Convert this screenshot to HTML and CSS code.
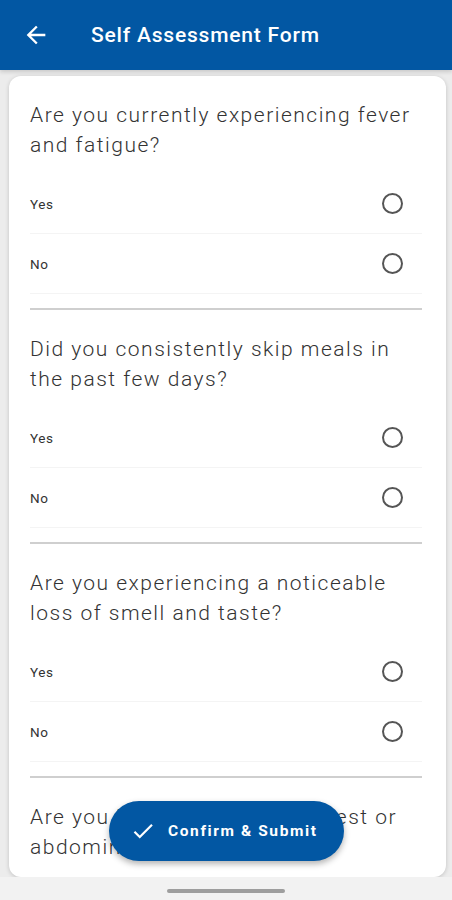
FILE: index.html
```html
<!doctype html>
<html lang="en">
  <head>
    <meta charset="UTF-8" />
    <meta name="viewport" content="width=device-width, initial-scale=1.0" />
    <title>Self Assessment Form</title>
    <link rel="stylesheet" href="styles.css">
  </head>
  <body>
    <div class="app">
      <header class="app-bar">
        <svg class="back" width="24" height="24" viewBox="0 0 24 24">
          <path d="M20 11H7.83l5.59-5.59L12 4l-8 8 8 8 1.41-1.41L7.83 13H20v-2z" fill="#fff" />
        </svg>
        <h1>Self Assessment Form</h1>
      </header>

      <main class="content">
        <div class="card">
          <div class="question">
            <p class="q-text">Are you currently experiencing fever and fatigue?</p>
            <div class="option"><span>Yes</span><i class="radio"></i></div>
            <div class="option"><span>No</span><i class="radio"></i></div>
          </div>
          <div class="question">
            <p class="q-text">Did you consistently skip meals in the past few days?</p>
            <div class="option"><span>Yes</span><i class="radio"></i></div>
            <div class="option"><span>No</span><i class="radio"></i></div>
          </div>
          <div class="question">
            <p class="q-text">Are you experiencing a noticeable loss of smell and taste?</p>
            <div class="option"><span>Yes</span><i class="radio"></i></div>
            <div class="option"><span>No</span><i class="radio"></i></div>
          </div>
          <div class="question">
            <p class="q-text">Are you having pain in the chest or abdominal area?</p>
          </div>
        </div>
      </main>

      <div class="nav-bar"><span class="handle"></span></div>

      <button type="button" class="fab">
        <svg width="26" height="26" viewBox="0 0 24 24">
          <path d="M9 16.17 4.83 12l-1.42 1.41L9 19 21 7l-1.41-1.41z" fill="#fff" />
        </svg>
        Confirm &amp; Submit
      </button>
    </div>
  </body>
</html>
```

FILE: styles.css
```css
body {
  margin: 0;
  font-family: Roboto, "Noto Sans", sans-serif;
  background: #f2f2f2;
}
.app {
  width: 452px;
  height: 900px;
  display: flex;
  flex-direction: column;
  overflow: hidden;
}
.app-bar {
  height: 70px;
  flex-shrink: 0;
  background: #0257a3;
  display: flex;
  align-items: center;
  padding: 0 0 0 22px;
  box-shadow: 0 2px 4px rgba(0, 0, 0, 0.15);
  position: relative;
  z-index: 1;
}
.back {
  width: 28px;
  height: 28px;
}
.app-bar h1 {
  margin: 0 0 0 41px;
  color: #fff;
  font-size: 21px;
  font-weight: 500;
  letter-spacing: 0.8px;
}
.content {
  flex: 1;
  min-height: 0;
  background: #ececec;
  padding: 6px 6px 0 9px;
  display: flex;
}
.card {
  flex: 1;
  background: #fff;
  border-radius: 12px;
  box-shadow: 0 1px 4px rgba(0, 0, 0, 0.18);
  padding: 24px 24px 0 21px;
  overflow: hidden;
}
.question {
  border-bottom: 2px solid #cfcfcf;
  padding-bottom: 14px;
  margin-bottom: 24px;
}
.q-text {
  margin: 0 0 14px;
  font-size: 21px;
  font-weight: 300;
  line-height: 30px;
  letter-spacing: 1.5px;
  color: #333;
}
.option {
  height: 59px;
  display: flex;
  align-items: center;
  justify-content: space-between;
  border-bottom: 1px solid #f4f4f4;
  padding-right: 19px;
  font-size: 13.5px;
  letter-spacing: 0.6px;
  color: #333;
}
.radio {
  width: 17px;
  height: 17px;
  border: 2px solid #555;
  border-radius: 50%;
}
.nav-bar {
  height: 23px;
  flex-shrink: 0;
  background: #f2f2f2;
  display: flex;
  justify-content: center;
  align-items: center;
}
.handle {
  width: 118px;
  height: 4px;
  border-radius: 2px;
  background: #9e9e9e;
  margin-top: 4px;
}
.fab {
  position: absolute;
  left: 109px;
  top: 801px;
  width: 235px;
  height: 60px;
  border: none;
  border-radius: 30px;
  background: #0257a3;
  color: #fff;
  font-family: Roboto, sans-serif;
  font-size: 15.5px;
  font-weight: 700;
  letter-spacing: 1.6px;
  display: flex;
  align-items: center;
  padding: 0 0 0 21px;
  gap: 12px;
  box-shadow: 0 3px 6px rgba(0, 0, 0, 0.3);
}
```
